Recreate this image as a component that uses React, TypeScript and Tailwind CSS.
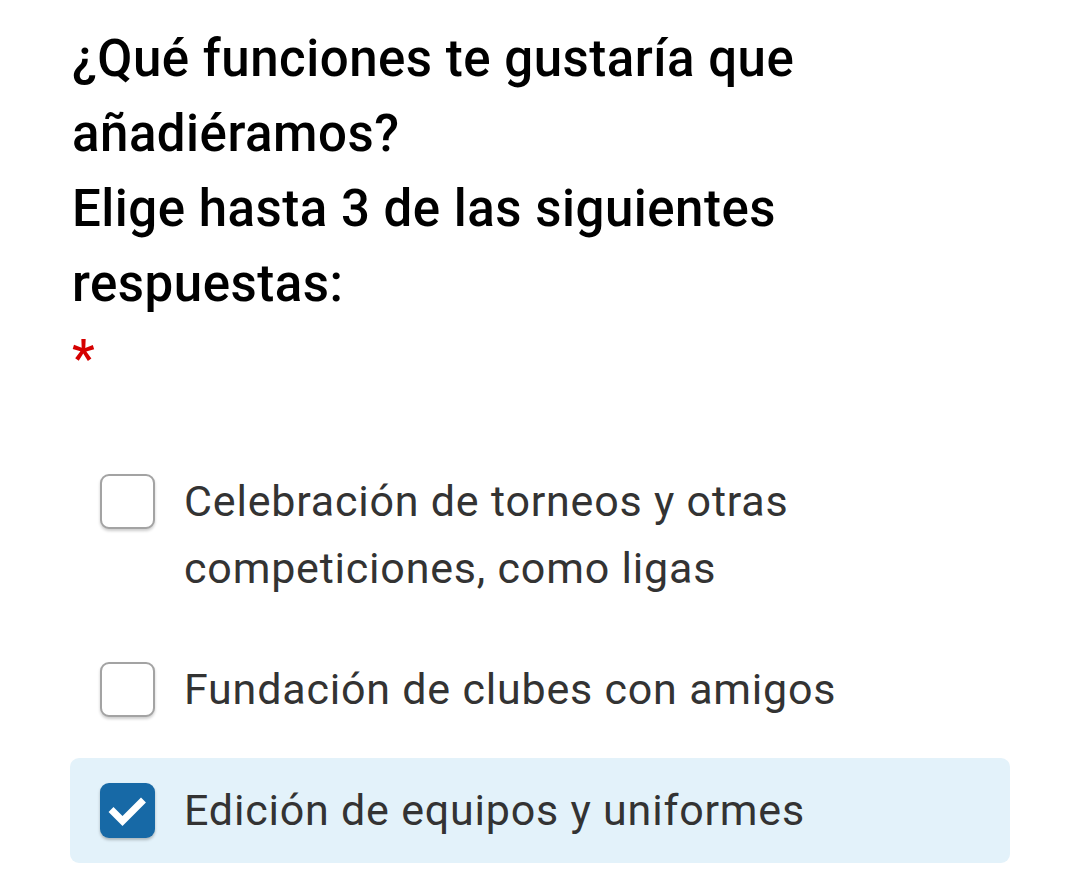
const options = [
  { id: "torneos", label: "Celebración de torneos y otras competiciones, como ligas", checked: false },
  { id: "clubes", label: "Fundación de clubes con amigos", checked: false },
  { id: "equipos", label: "Edición de equipos y uniformes", checked: true },
];

function CheckBox({ checked }: { checked: boolean }) {
  if (checked) {
    return (
      <span className="flex h-[55px] w-[55px] shrink-0 items-center justify-center rounded-[9px] bg-[#1769a6] shadow-[0_2px_3px_rgba(0,0,0,0.25)]">
        <svg viewBox="0 0 55 55" className="h-[55px] w-[55px]">
          <path d="M13.5 29 L22.5 38 L41 19.5" fill="none" stroke="white" strokeWidth="7" strokeLinecap="square" />
        </svg>
      </span>
    );
  }
  return (
    <span className="block h-[55px] w-[55px] shrink-0 rounded-[9px] border-2 border-[#a3a3a3] bg-white shadow-[0_2px_3px_rgba(0,0,0,0.2)]" />
  );
}

export default function App() {
  return (
    <div className="min-h-[880px] bg-white pt-[21px] font-['Roboto',sans-serif]">
      <div className="w-[1010px] pl-[72px]">
        <h1 className="text-[51px] leading-[75px] font-medium tracking-[0.5px] text-black">
          ¿Qué funciones te gustaría que añadiéramos?
          <br />
          Elige hasta 3 de las siguientes respuestas:
          <br />
          <span className="text-[#d50000]">*</span>
        </h1>
      </div>
      <ul className="mt-[53px] ml-[70px] flex w-[940px] flex-col gap-[16px]">
        {options.map((o) => (
          <li
            key={o.id}
            className={`flex items-start gap-[29px] rounded-[9px] py-[19px] pl-[30px] pr-[30px] ${o.checked ? "bg-[#e3f2fa]" : ""}`}
          >
            <span className="pt-[6px]">
              <CheckBox checked={o.checked} />
            </span>
            <span className="text-[43px] leading-[67px] tracking-[0.8px] text-[#333333]">{o.label}</span>
          </li>
        ))}
      </ul>
    </div>
  );
}
